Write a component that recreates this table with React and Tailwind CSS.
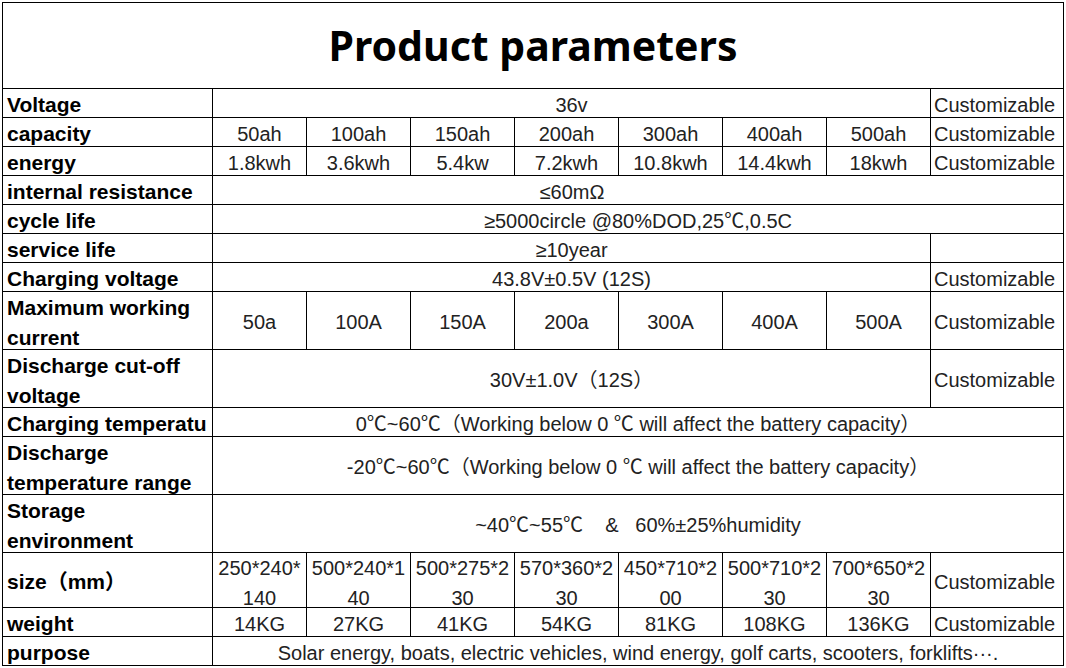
const cell = "border-r border-b border-black flex items-center overflow-hidden";
const label = `${cell} pl-1 pt-[3px] font-bold text-[21px] text-black whitespace-nowrap`;
const label2 = `${cell} pl-1 pt-[5px] font-bold text-[21px] leading-[30px] text-black`;
const val = `${cell} pt-[3px] justify-center whitespace-nowrap`;
const custom = `${cell} pl-[3px] pt-[3px] whitespace-nowrap`;

const capacities = ["50ah", "100ah", "150ah", "200ah", "300ah", "400ah", "500ah"];
const energies = ["1.8kwh", "3.6kwh", "5.4kw", "7.2kwh", "10.8kwh", "14.4kwh", "18kwh"];
const currents = ["50a", "100A", "150A", "200a", "300A", "400A", "500A"];
const sizes = [
  ["250*240*", "140"],
  ["500*240*1", "40"],
  ["500*275*2", "30"],
  ["570*360*2", "30"],
  ["450*710*2", "00"],
  ["500*710*2", "30"],
  ["700*650*2", "30"],
];
const weights = ["14KG", "27KG", "41KG", "54KG", "81KG", "108KG", "136KG"];

const Custom = () => <div className={custom}>Customizable</div>;

const App = () => {
  return (
    <div className="bg-white w-[1066px] h-[668px] p-[2px]">
      <div
        className="grid grid-cols-[210px_94px_104px_104px_104px_104px_104px_104px_133px] grid-rows-[86px_29px_29px_29px_29px_29px_29px_29px_58px_58px_29px_58px_58px_55px_29px_29px] border-l border-t border-black text-[20px] text-[#222]"
        style={{ fontFamily: '"Liberation Sans", "Noto Sans CJK SC", sans-serif' }}
      >
        {/* title */}
        <div className={`${cell} justify-center col-span-9`}>
          <h1
            className="text-[41px] font-bold text-black"
            style={{ fontFamily: '"Noto Sans", "Noto Sans CJK SC", sans-serif' }}
          >
            Product parameters
          </h1>
        </div>

        <div className={label}>Voltage</div>
        <div className={`${val} col-span-7`}>36v</div>
        <Custom />

        <div className={label}>capacity</div>
        {capacities.map((c) => (
          <div key={c} className={val}>{c}</div>
        ))}
        <Custom />

        <div className={label}>energy</div>
        {energies.map((e) => (
          <div key={e} className={val}>{e}</div>
        ))}
        <Custom />

        <div className={label}>internal resistance</div>
        <div className={`${cell} pt-[3px] col-span-8`}>
          <div className="w-[718px] text-center">≤60mΩ</div>
        </div>

        <div className={label}>cycle life</div>
        <div className={`${val} col-span-8`}>≥5000circle @80%DOD,25℃,0.5C</div>

        <div className={label}>service life</div>
        <div className={`${val} col-span-7`}>≥10year</div>
        <div className={custom}></div>

        <div className={label}>Charging voltage</div>
        <div className={`${val} col-span-7`}>43.8V±0.5V (12S)</div>
        <Custom />

        <div className={label2}>
          Maximum working
          <br />
          current
        </div>
        {currents.map((c) => (
          <div key={c} className={val}>{c}</div>
        ))}
        <Custom />

        <div className={label2}>
          Discharge cut-off
          <br />
          voltage
        </div>
        <div className={`${val} col-span-7`}>30V±1.0V（12S）</div>
        <Custom />

        <div className={label}>Charging temperatu</div>
        <div className={`${val} col-span-8`}>
          0℃~60℃（Working below 0 ℃ will affect the battery capacity）
        </div>

        <div className={label2}>
          Discharge
          <br />
          temperature range
        </div>
        <div className={`${val} col-span-8`}>
          -20℃~60℃（Working below 0 ℃ will affect the battery capacity）
        </div>

        <div className={label2}>
          Storage
          <br />
          environment
        </div>
        <div className={`${val} col-span-8`}>
          ~40℃~55℃&nbsp;&nbsp;&nbsp;&nbsp;&amp;&nbsp;&nbsp;&nbsp;60%±25%humidity
        </div>

        <div className={label}>size（mm）</div>
        {sizes.map(([a, b]) => (
          <div key={a} className={`${cell} flex-col justify-start leading-[30px] whitespace-nowrap`}>
            <span>{a}</span>
            <span>{b}</span>
          </div>
        ))}
        <Custom />

        <div className={label}>weight</div>
        {weights.map((w) => (
          <div key={w} className={val}>{w}</div>
        ))}
        <Custom />

        <div className={label}>purpose</div>
        <div className={`${val} col-span-8`}>
          Solar energy, boats, electric vehicles, wind energy, golf carts, scooters, forklifts···.
        </div>
      </div>
    </div>
  );
};

export default App;
